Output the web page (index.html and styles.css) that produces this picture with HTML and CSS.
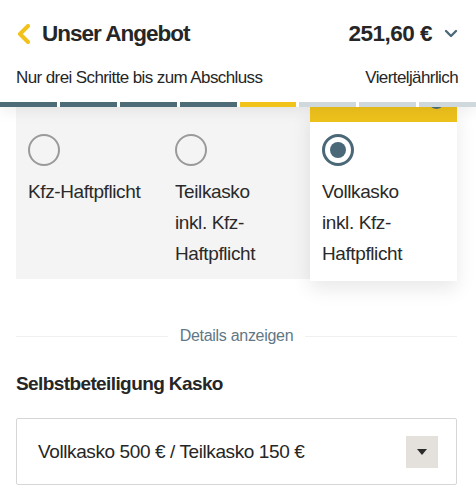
FILE: index.html
```html
<!DOCTYPE html>
<html lang="de">
<head>
<meta charset="utf-8">
<link rel="stylesheet" href="styles.css">
</head>
<body>
<header class="header">
  <div class="title-row">
    <div class="title-left">
      <svg class="back" width="16" height="20" viewBox="0 0 16 20"><path d="M12 2 L4 10 L12 18" fill="none" stroke="#f2c21b" stroke-width="4" stroke-linecap="round" stroke-linejoin="round"/></svg>
      <h1 class="title">Unser Angebot</h1>
    </div>
    <div class="title-right">
      <span class="price">251,60 €</span>
      <svg class="chev" width="14" height="10" viewBox="0 0 14 10"><path d="M2 2 L7 7 L12 2" fill="none" stroke="#4d6a78" stroke-width="2.4" stroke-linecap="round" stroke-linejoin="round"/></svg>
    </div>
  </div>
  <div class="sub-row">
    <span>Nur drei Schritte bis zum Abschluss</span>
    <span>Vierteljährlich</span>
  </div>
  <div class="progress">
    <span class="seg done"></span><span class="seg done"></span><span class="seg done"></span><span class="seg done"></span><span class="seg current"></span><span class="seg"></span><span class="seg"></span><span class="seg"></span>
  </div>
</header>
<main class="main">
  <div class="options">
    <div class="opt">
      <span class="radio"></span>
      <div class="label">Kfz-Haftpflicht</div>
    </div>
    <div class="opt">
      <span class="radio"></span>
      <div class="label">Teilkasko<br>inkl. Kfz-<br>Haftpflicht</div>
    </div>
    <div class="opt selected">
      <span class="badge"></span>
      <span class="radio on"></span>
      <div class="label">Vollkasko<br>inkl. Kfz-<br>Haftpflicht</div>
    </div>
  </div>
  <div class="details"><span>Details anzeigen</span></div>
  <h2 class="section">Selbstbeteiligung Kasko</h2>
  <div class="select">
    <span>Vollkasko 500 € / Teilkasko 150 €</span>
    <span class="drop"><svg width="10" height="6" viewBox="0 0 10 6"><path d="M0 0 H10 L5 6 Z" fill="#2b2b2b"/></svg></span>
  </div>
</main>
</body>
</html>
```
FILE: styles.css
```css
* { box-sizing: border-box; }
html, body { margin: 0; padding: 0; background: #fff; }
body {
  font-family: "Liberation Sans", Arial, sans-serif;
  color: #262626;
  width: 476px;
  height: 500px;
  overflow: hidden;
}
.header {
  position: relative;
  z-index: 3;
  background: #fff;
  box-shadow: 0 4px 14px rgba(0,0,0,0.07);
}
.title-row {
  display: flex;
  justify-content: space-between;
  align-items: center;
  padding: 17px 18px 0 16px;
  height: 51px;
}
.title-left, .title-right { display: flex; align-items: center; }
.back { margin-right: 10px; }
.title {
  margin: 0;
  font-size: 22.5px;
  letter-spacing: -1px;
  font-weight: bold;
  color: #262626;
}
.price { font-size: 22.5px; letter-spacing: -0.5px; font-weight: bold; }
.chev { margin-left: 12px; }
.sub-row {
  display: flex;
  justify-content: space-between;
  padding: 2px 18px 0 16px;
  font-size: 17px;
  letter-spacing: -0.6px;
  height: 51px;
  align-items: center;
}
.progress {
  display: flex;
  gap: 3px;
  height: 5px;
  background: #fff;
}
.seg { flex: 1; background: #cfd8dd; }
.seg.done { background: #4e6b78; }
.seg.current { background: #f2c318; }

.main { padding: 0 19px 0 16px; }
.options {
  display: grid;
  grid-template-columns: repeat(3, 1fr);
  background: #f4f4f4;
  position: relative;
  z-index: 1;
}
.opt {
  padding: 27px 8px 10px 12px;
  position: relative;
}
.opt.selected {
  background: #fff;
  border-top: 15px solid #eec21c;
  padding-top: 12px;
  margin-bottom: -2px;
  box-shadow: 0 8px 18px rgba(0,0,0,0.09);
}
.badge {
  position: absolute;
  top: -30px;
  right: 12px;
  width: 17px;
  height: 17px;
  border-radius: 50%;
  background: #4e6b78;
}
.radio {
  display: block;
  width: 32px;
  height: 32px;
  border-radius: 50%;
  border: 2px solid #9a9a9a;
}
.radio.on {
  border: 3px solid #4a6878;
  position: relative;
}
.radio.on::after {
  content: "";
  position: absolute;
  left: 5px; top: 5px;
  width: 16px; height: 16px;
  border-radius: 50%;
  background: #4a6878;
}
.label {
  margin-top: 10px;
  font-size: 19px;
  letter-spacing: -0.4px;
  line-height: 31px;
  color: #2a2a2a;
}
.details {
  display: flex;
  align-items: center;
  gap: 12px;
  margin-top: 48px;
  font-size: 16px;
  letter-spacing: -0.3px;
  color: #5f7884;
}
.details::before, .details::after {
  content: "";
  flex: 1;
  height: 1px;
  background: #f0f0f0;
}
.section {
  margin: 28px 0 0;
  font-size: 19px;
  letter-spacing: -0.6px;
  font-weight: bold;
  color: #262626;
}
.select {
  margin-top: 23px;
  height: 67px;
  border: 1px solid #d6d6d6;
  border-radius: 2px;
  display: flex;
  align-items: center;
  justify-content: space-between;
  padding: 0 18px 0 21px;
  font-size: 19px;
  letter-spacing: -0.4px;
  color: #262626;
}
.drop {
  width: 32px;
  height: 32px;
  background: #e4e0db;
  display: flex;
  align-items: center;
  justify-content: center;
}
```
